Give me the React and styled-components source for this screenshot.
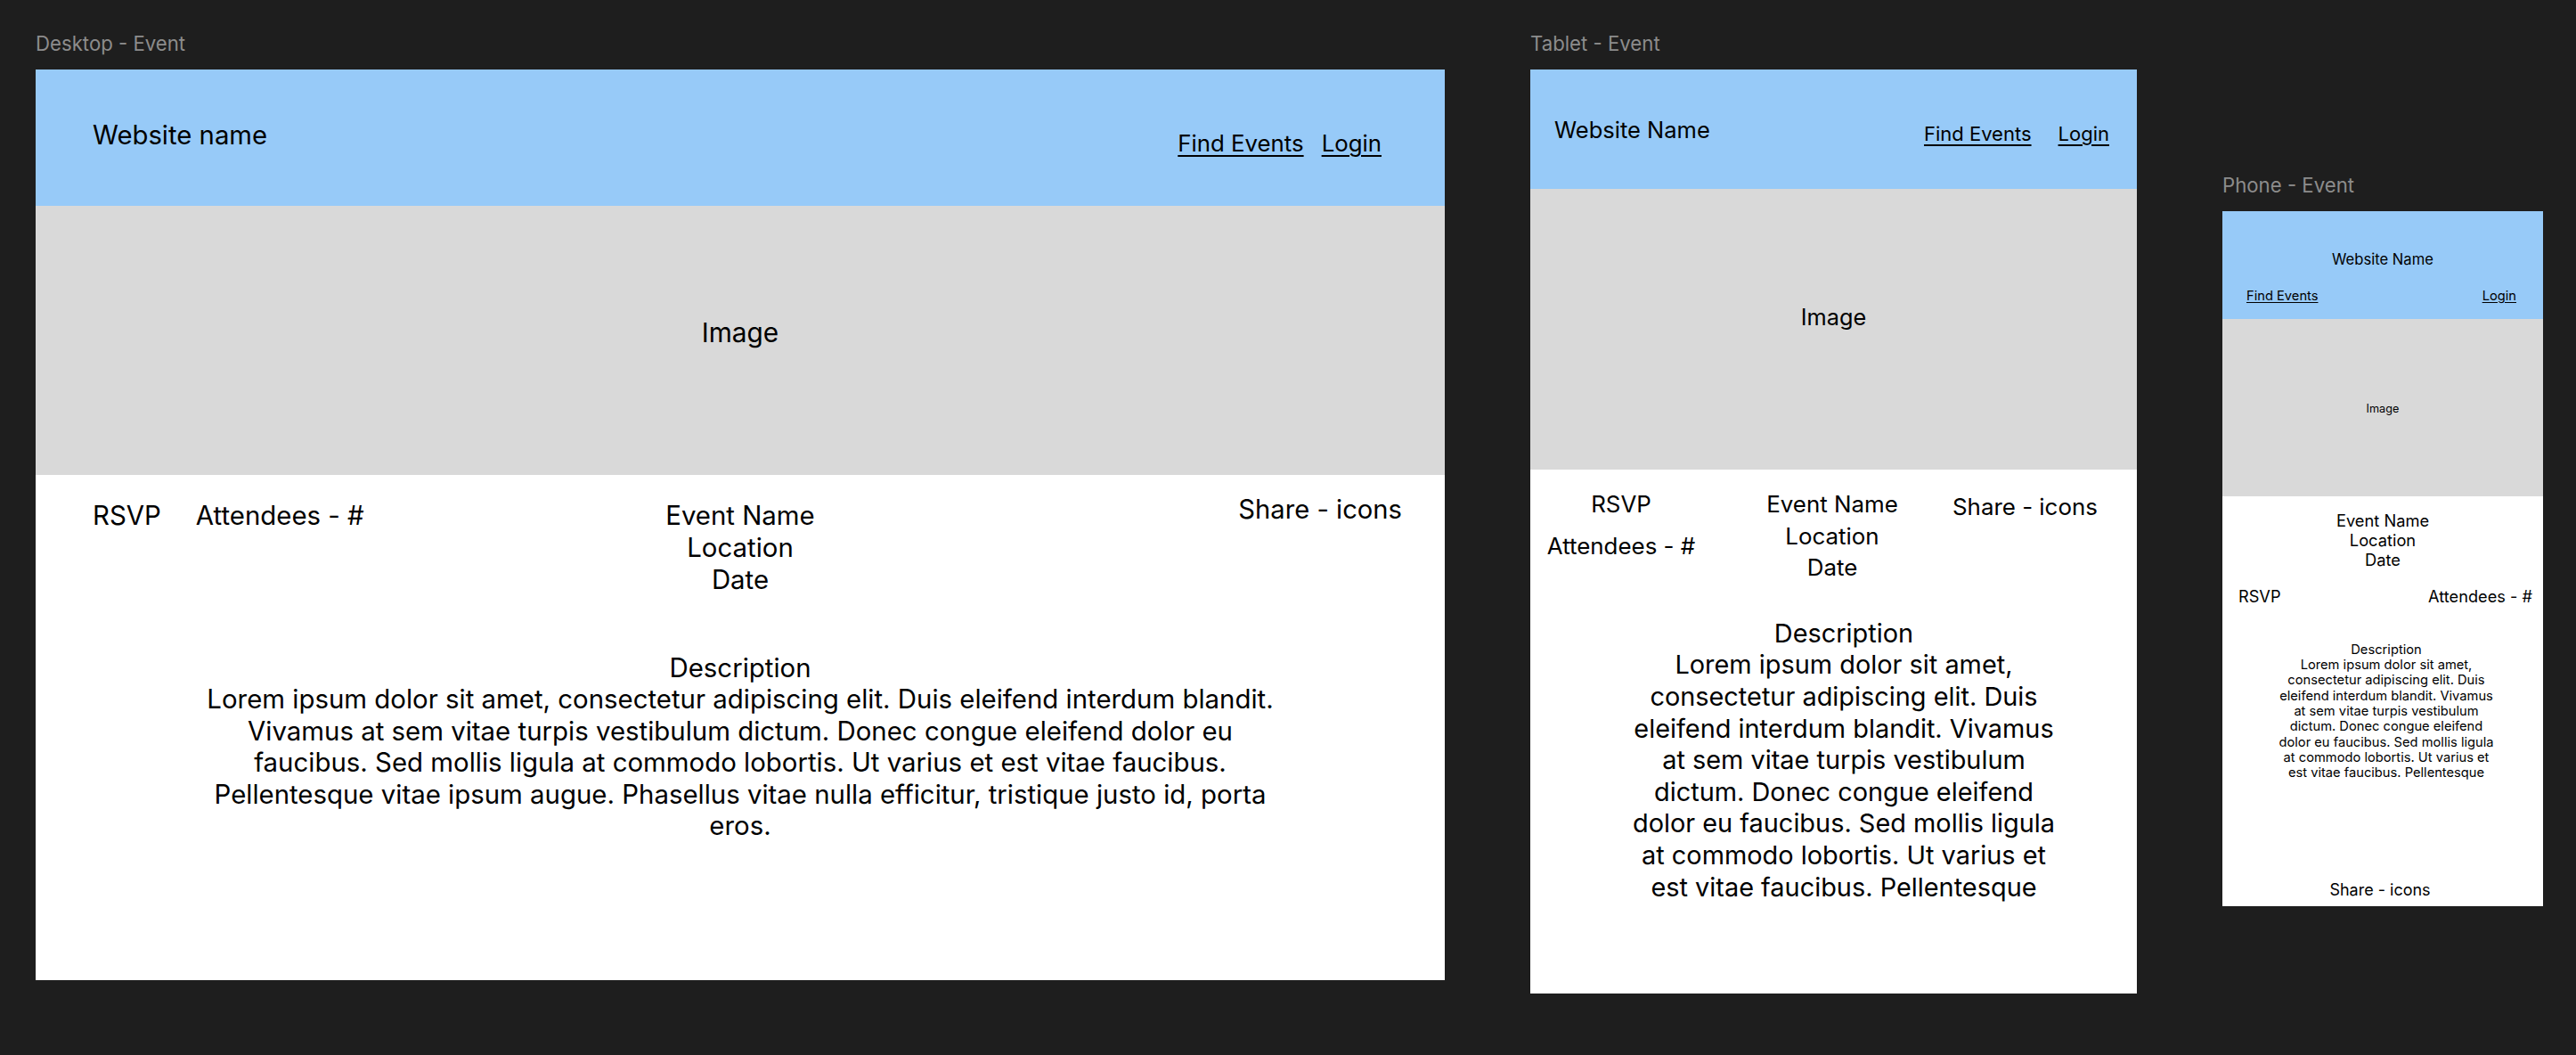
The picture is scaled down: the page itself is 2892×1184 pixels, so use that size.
import React from "react";
import styled, { createGlobalStyle } from "styled-components";

const wideLines = [
  "Lorem ipsum dolor sit amet, consectetur adipiscing elit. Duis eleifend interdum blandit.",
  "Vivamus at sem vitae turpis vestibulum dictum. Donec congue eleifend dolor eu",
  "faucibus. Sed mollis ligula at commodo lobortis. Ut varius et est vitae faucibus.",
  "Pellentesque vitae ipsum augue. Phasellus vitae nulla efficitur, tristique justo id, porta",
  "eros.",
];

const narrowLines = [
  "Lorem ipsum dolor sit amet,",
  "consectetur adipiscing elit. Duis",
  "eleifend interdum blandit. Vivamus",
  "at sem vitae turpis vestibulum",
  "dictum. Donec congue eleifend",
  "dolor eu faucibus. Sed mollis ligula",
  "at commodo lobortis. Ut varius et",
  "est vitae faucibus. Pellentesque",
];

function EventDetails({ size, lh, top }) {
  return (
    <EventInfo $size={size} $lh={lh} $top={top}>
      <div>Event Name</div>
      <div>Location</div>
      <div>Date</div>
    </EventInfo>
  );
}

function DescriptionBlock({ lines, size, lh, top, shift }) {
  return (
    <Description $size={size} $lh={lh} $top={top} $shift={shift}>
      <div>Description</div>
      {lines.map((line) => (
        <div key={line}>{line}</div>
      ))}
    </Description>
  );
}

export default function App() {
  return (
    <>
      <GlobalStyle />
      <Canvas>
        <Column>
          <FrameLabel>Desktop - Event</FrameLabel>
          <Frame $w={1582} $h={1022}>
            <TopBar $h={153} $pad="56px 71px 0 64px">
              <SiteName $size={29.3}>Website name</SiteName>
              <Nav $gap={20} $top={10.6}>
                <NavLink $size={25.8}>Find Events</NavLink>
                <NavLink $size={25.8}>Login</NavLink>
              </Nav>
            </TopBar>
            <Hero $h={302} $top={124} $size={29.8}>
              Image
            </Hero>
            <DesktopInfo>
              <Actions>
                <Label $size={29.4}>RSVP</Label>
                <Label $size={29.4}>Attendees - #</Label>
              </Actions>
              <EventDetails size={29.4} lh={36} top={0} />
              <ShareSlot $top={-7}>
                <Label $size={29.2}>Share - icons</Label>
              </ShareSlot>
            </DesktopInfo>
            <DescriptionBlock
              lines={wideLines}
              size={29.4}
              lh={35.5}
              top={63}
              shift={0}
            />
          </Frame>
        </Column>

        <Column>
          <FrameLabel>Tablet - Event</FrameLabel>
          <Frame $w={681} $h={1037}>
            <TopBar $h={134} $pad="53px 31px 0 27px">
              <SiteName $size={25.5}>Website Name</SiteName>
              <Nav $gap={30} $top={5.5}>
                <NavLink $size={22}>Find Events</NavLink>
                <NavLink $size={22}>Login</NavLink>
              </Nav>
            </TopBar>
            <Hero $h={315} $top={128.5} $size={25.3}>
              Image
            </Hero>
            <TabletInfo>
              <TabletActions>
                <Label $size={25.9} $lh={35.5}>
                  RSVP
                </Label>
                <Label $size={25.9} $lh={35.5}>
                  Attendees - #
                </Label>
              </TabletActions>
              <EventDetails size={25.9} lh={35.5} top={0} />
              <ShareSlot $top={3} $align="flex-start">
                <Label $size={25.9} $lh={35.5}>
                  Share - icons
                </Label>
              </ShareSlot>
            </TabletInfo>
            <DescriptionBlock
              lines={narrowLines}
              size={28.9}
              lh={35.6}
              top={38}
              shift={23}
            />
          </Frame>
        </Column>

        <Column $top={159}>
          <FrameLabel>Phone - Event</FrameLabel>
          <Frame $w={360} $h={780}>
            <PhoneBar>
              <SiteName $size={16.6}>Website Name</SiteName>
              <PhoneNav>
                <NavLink $size={14.7}>Find Events</NavLink>
                <NavLink $size={14.7}>Login</NavLink>
              </PhoneNav>
            </PhoneBar>
            <Hero $h={199} $top={93} $size={12.7}>
              Image
            </Hero>
            <EventDetails size={18.3} lh={22} top={15.5} />
            <PhoneActions>
              <Label $size={18.2} $lh={22}>
                RSVP
              </Label>
              <Label $size={18.2} $lh={22}>
                Attendees - #
              </Label>
            </PhoneActions>
            <DescriptionBlock
              lines={narrowLines}
              size={14.7}
              lh={17.3}
              top={41}
              shift={8}
            />
            <PhoneShare>Share - icons</PhoneShare>
          </Frame>
        </Column>
      </Canvas>
    </>
  );
}

const GlobalStyle = createGlobalStyle`
  html, body {
    margin: 0;
    padding: 0;
    background: #1e1e1e;
  }
  body {
    font-family: Inter, "Noto Sans", sans-serif;
    color: #000;
  }
`;

const Canvas = styled.div`
  display: flex;
  align-items: flex-start;
  gap: 96px;
  height: 1184px;
  box-sizing: border-box;
  padding: 36px 0 0 40px;
  background: #1e1e1e;
  overflow: hidden;
`;

const Column = styled.div`
  display: flex;
  flex-direction: column;
  gap: 15.4px;
  margin-top: ${(p) => p.$top || 0}px;
`;

const FrameLabel = styled.div`
  font-size: 22.2px;
  line-height: 1.21;
  color: #8c8c8c;
`;

const Frame = styled.div`
  display: flex;
  flex-direction: column;
  width: ${(p) => p.$w}px;
  height: ${(p) => p.$h}px;
  background: #ffffff;
  overflow: hidden;
`;

const TopBar = styled.header`
  display: flex;
  justify-content: space-between;
  align-items: flex-start;
  flex: none;
  height: ${(p) => p.$h}px;
  box-sizing: border-box;
  padding: ${(p) => p.$pad};
  background: #97caf8;
`;

const SiteName = styled.div`
  font-size: ${(p) => p.$size}px;
  line-height: 1.21;
`;

const Nav = styled.nav`
  display: flex;
  gap: ${(p) => p.$gap}px;
  margin-top: ${(p) => p.$top}px;
`;

const NavLink = styled.a`
  font-size: ${(p) => p.$size}px;
  line-height: 1.21;
  color: #000;
  text-decoration: underline;
  text-decoration-thickness: ${(p) => (p.$size > 20 ? 2 : 1)}px;
  text-underline-offset: ${(p) => (p.$size > 20 ? 4 : 2)}px;
`;

const Hero = styled.div`
  flex: none;
  height: ${(p) => p.$h}px;
  box-sizing: border-box;
  padding-top: ${(p) => p.$top}px;
  background: #d9d9d9;
  text-align: center;
  font-size: ${(p) => p.$size}px;
  line-height: 1.21;
`;

const Label = styled.div`
  font-size: ${(p) => p.$size}px;
  line-height: ${(p) => (p.$lh ? `${p.$lh}px` : "36px")};
  white-space: nowrap;
`;

const EventInfo = styled.div`
  margin-top: ${(p) => p.$top}px;
  text-align: center;
  font-size: ${(p) => p.$size}px;
  line-height: ${(p) => p.$lh}px;
`;

const DesktopInfo = styled.section`
  display: grid;
  grid-template-columns: 1fr auto 1fr;
  align-items: start;
  padding-top: 27.5px;
`;

const Actions = styled.div`
  display: flex;
  gap: 39px;
  padding-left: 64px;
`;

const ShareSlot = styled.div`
  display: flex;
  justify-content: ${(p) => p.$align || "flex-end"};
  margin-top: ${(p) => p.$top}px;
  padding-right: 48px;
`;

const TabletInfo = styled.section`
  display: grid;
  grid-template-columns: 204px 270px 1fr;
  align-items: start;
  padding-top: 21px;
`;

const TabletActions = styled.div`
  display: flex;
  flex-direction: column;
  align-items: center;
  gap: 11px;
`;

const Description = styled.div`
  margin-top: ${(p) => p.$top}px;
  padding-left: ${(p) => p.$shift}px;
  text-align: center;
  font-size: ${(p) => p.$size}px;
  line-height: ${(p) => p.$lh}px;
  white-space: nowrap;
`;

const PhoneBar = styled.header`
  display: flex;
  flex-direction: column;
  align-items: center;
  flex: none;
  height: 121px;
  box-sizing: border-box;
  padding-top: 43.8px;
  background: #97caf8;
`;

const PhoneNav = styled.nav`
  display: flex;
  justify-content: space-between;
  align-self: stretch;
  margin-top: 22.4px;
  padding: 0 30px 0 27px;
`;

const PhoneActions = styled.div`
  display: flex;
  justify-content: space-between;
  margin-top: 19px;
  padding: 0 12px 0 18px;
`;

const PhoneShare = styled.div`
  margin-top: auto;
  padding: 0 6px 7.5px 0;
  text-align: center;
  font-size: 18px;
  line-height: 22px;
`;
